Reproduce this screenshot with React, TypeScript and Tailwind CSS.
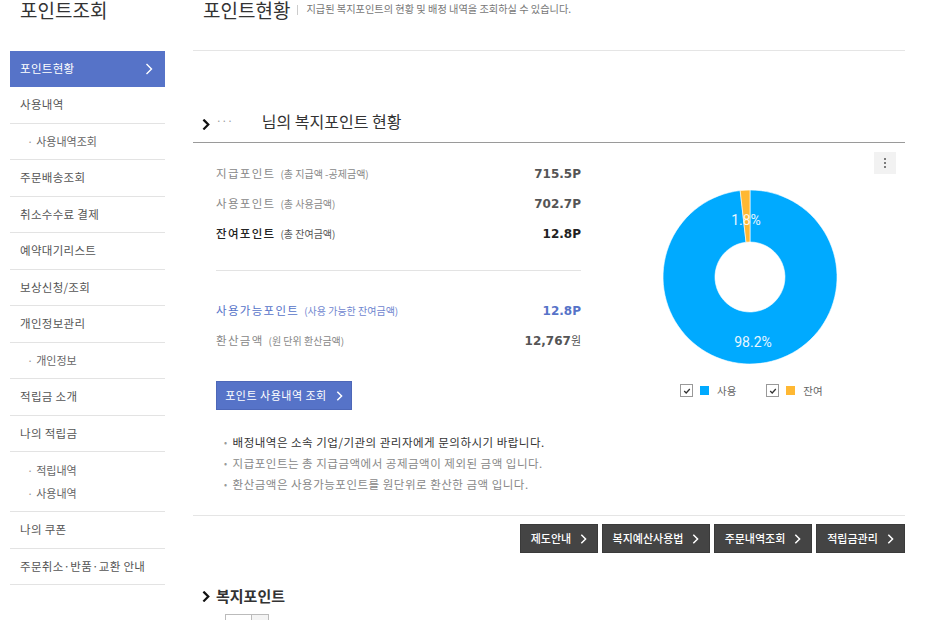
import React from 'react';

// 포인트조회 > 포인트현황 화면

const KR = { fontFamily: '"Noto Sans CJK KR", "Noto Sans", sans-serif' };
const NUM = { fontFamily: '"DejaVu Sans", "Noto Sans CJK KR", sans-serif' };

type MenuItem = { label: string; sub?: boolean; active?: boolean };

const menu: MenuItem[][] = [
  [{ label: '포인트현황', active: true }],
  [{ label: '사용내역' }],
  [{ label: '사용내역조회', sub: true }],
  [{ label: '주문배송조회' }],
  [{ label: '취소수수료 결제' }],
  [{ label: '예약대기리스트' }],
  [{ label: '보상신청/조회' }],
  [{ label: '개인정보관리' }],
  [{ label: '개인정보', sub: true }],
  [{ label: '적립금 소개' }],
  [{ label: '나의 적립금' }],
  [
    { label: '적립내역', sub: true },
    { label: '사용내역', sub: true },
  ],
  [{ label: '나의 쿠폰' }],
  [{ label: '주문취소·반품·교환 안내' }],
];

const Chevron = ({ className = '', stroke = 'currentColor', width = 1.6 }: { className?: string; stroke?: string; width?: number }) => (
  <svg viewBox="0 0 8 12" className={className} fill="none">
    <polyline points="2,1.5 6.5,6 2,10.5" stroke={stroke} strokeWidth={width} strokeLinecap="square" />
  </svg>
);

const Sidebar = () => (
  <aside className="w-[155px] ml-[10px] shrink-0" style={KR}>
    <div className="h-[51px] pl-[10px] flex items-start">
      <span className="text-[19px] leading-[19px] text-[#333]">포인트조회</span>
    </div>
    <ul>
      {menu.map((group, gi) => {
        const active = group[0].active;
        const isSubGroup = group[0].sub;
        return (
          <li
            key={gi}
            className={
              active
                ? 'h-[36px] bg-[#5673c8] flex items-center justify-between pl-[10px] pr-[12px] text-white text-[11.5px] tracking-[0.3px]'
                : isSubGroup
                ? `border-b border-[#e3e3e3] flex flex-col justify-center ${group.length > 1 ? 'h-[60px] gap-[7px]' : 'h-[36.5px]'}`
                : 'h-[36.5px] border-b border-[#e3e3e3] flex items-center pl-[10px] text-[11.5px] tracking-[0.3px] text-[#555]'
            }
          >
            {active ? (
              <>
                <span>{group[0].label}</span>
                <Chevron className="w-[8px] h-[12px]" stroke="#fff" width={1.4} />
              </>
            ) : isSubGroup ? (
              group.map((s, si) => (
                <div key={si} className="pl-[17px] text-[11px] text-[#666] leading-[16px]">
                  <span className="text-[#999] mr-[3px]">·</span>
                  {s.label}
                </div>
              ))
            ) : (
              group[0].label
            )}
          </li>
        );
      })}
    </ul>
  </aside>
);

const StatRow = ({
  label,
  sub,
  value,
  unit,
  tone,
}: {
  label: string;
  sub: string;
  value: string;
  unit?: string;
  tone: 'gray' | 'dark' | 'blue';
}) => {
  const labelCls =
    tone === 'blue' ? 'text-[#5673c8]' : tone === 'dark' ? 'text-[#222] font-medium' : 'text-[#888]';
  const subCls = tone === 'blue' ? 'text-[#6f86cf]' : tone === 'dark' ? 'text-[#555]' : 'text-[#888]';
  const valCls = tone === 'blue' ? 'text-[#5673c8]' : tone === 'dark' ? 'text-[#222]' : 'text-[#555]';
  return (
    <div className="h-[30px] flex items-center justify-between">
      <div className="flex items-baseline gap-[5px]" style={KR}>
        <span className={`text-[11.5px] tracking-[1.3px] ${labelCls}`}>{label}</span>
        <span className={`text-[10px] ${subCls}`}>{sub}</span>
      </div>
      <div className={`text-[12px] font-bold ${valCls}`} style={NUM}>
        {value}
        {unit && (
          <span className="text-[11px] font-normal" style={KR}>
            {unit}
          </span>
        )}
      </div>
    </div>
  );
};

const Donut = () => (
  <svg width="180" height="180" viewBox="0 0 180 180">
    <path
      d="M 90 3 A 87 87 0 1 1 80.18 3.56 L 86.05 55.22 A 35 35 0 1 0 90 55 Z"
      fill="#00aaff"
      stroke="#fff"
      strokeWidth="0.6"
    />
    <path
      d="M 90 3 A 87 87 0 0 0 80.18 3.56 L 86.05 55.22 A 35 35 0 0 1 90 55 Z"
      fill="#ffb833"
      stroke="#fff"
      strokeWidth="0.6"
    />
    <text x="86" y="38" textAnchor="middle" fill="#fff" fontSize="14" style={{ fontFamily: 'Roboto, "Noto Sans", sans-serif' }} opacity="0.9">
      1.8%
    </text>
    <text x="93" y="160" textAnchor="middle" fill="#fff" fontSize="14" style={{ fontFamily: 'Roboto, "Noto Sans", sans-serif' }} opacity="0.9">
      98.2%
    </text>
  </svg>
);

const LegendItem = ({ color, label }: { color: string; label: string }) => (
  <div className="flex items-center">
    <span className="w-[13px] h-[13px] border border-[#999] bg-white flex items-center justify-center">
      <svg viewBox="0 0 10 10" className="w-[8px] h-[8px]">
        <polyline points="1.5,5 4,7.5 8.5,2.5" fill="none" stroke="#333" strokeWidth="1.6" />
      </svg>
    </span>
    <span className="w-[9px] h-[9px] ml-[7px]" style={{ background: color }} />
    <span className="ml-[8px] text-[10.5px] text-[#666]" style={KR}>
      {label}
    </span>
  </div>
);

const DarkButton = ({ label, w }: { label: string; w: string }) => (
  <button
    className={`${w} h-[29px] bg-[#444] border border-[#3a3a3a] text-white text-[11px] font-medium flex items-center justify-center gap-[9px]`}
    style={KR}
  >
    {label}
    <Chevron className="w-[7px] h-[10px]" stroke="#fff" width={1.8} />
  </button>
);

export default function App() {
  return (
    <div className="w-[930px] h-[620px] overflow-hidden bg-white flex" style={KR}>
      <Sidebar />

      <main className="ml-[28px] w-[712px] shrink-0">
        {/* 페이지 헤더 */}
        <div className="h-[51px] border-b border-[#e5e5e5] pl-[10px] flex items-start">
          <span className="text-[19px] leading-[19px] text-[#333]">포인트현황</span>
          <span className="ml-[7px] mt-[5px] w-px h-[10px] bg-[#ccc]" />
          <span className="ml-[8px] mt-[2px] text-[10.2px] leading-[14px] text-[#777]">
            지급된 복지포인트의 현황 및 배정 내역을 조회하실 수 있습니다.
          </span>
        </div>

        {/* 섹션 타이틀 */}
        <div className="h-[92px] border-b border-[#9a9a9a] flex items-end pb-[9px] pl-[9px]">
          <Chevron className="w-[8px] h-[11px] mb-[3px]" stroke="#111" width={2.4} />
          <span className="ml-[6px] text-[#999] text-[10px] mb-[5px]">···</span>
          <span className="ml-[29px] text-[16px] text-[#333]">님의 복지포인트 현황</span>
        </div>

        <div className="flex border-b border-[#e5e5e5]">
          {/* 좌측 포인트 내역 */}
          <div className="ml-[23px] w-[365px] pt-[16px] pb-[20px]">
            <StatRow label="지급포인트" sub="(총 지급액 -공제금액)" value="715.5P" tone="gray" />
            <StatRow label="사용포인트" sub="(총 사용금액)" value="702.7P" tone="gray" />
            <StatRow label="잔여포인트" sub="(총 잔여금액)" value="12.8P" tone="dark" />
            <div className="mt-[21px] border-t border-[#e3e3e3]" />
            <div className="mt-[25px]">
              <StatRow label="사용가능포인트" sub="(사용 가능한 잔여금액)" value="12.8P" tone="blue" />
              <StatRow label="환산금액" sub="(원 단위 환산금액)" value="12,767" unit="원" tone="gray" />
            </div>
            <button className="mt-[25px] w-[136px] h-[29px] bg-[#5673c8] border border-[#4d67b8] text-white text-[11px] flex items-center justify-center gap-[9px] tracking-[0.5px]">
              포인트 사용내역 조회
              <Chevron className="w-[7px] h-[10px]" stroke="#fff" width={1.8} />
            </button>
            <ul className="mt-[22px] ml-[8px] text-[11.5px] tracking-[0.5px]">
              <li className="h-[21px] flex items-center text-[#333]">
                <span className="text-[#999] text-[9px] mr-[5px]">•</span>배정내역은 소속 기업/기관의 관리자에게 문의하시기 바랍니다.
              </li>
              <li className="h-[21px] flex items-center text-[#888]">
                <span className="text-[#999] text-[9px] mr-[5px]">•</span>지급포인트는 총 지급금액에서 공제금액이 제외된 금액 입니다.
              </li>
              <li className="h-[21px] flex items-center text-[#888]">
                <span className="text-[#999] text-[9px] mr-[5px]">•</span>환산금액은 사용가능포인트를 원단위로 환산한 금액 입니다.
              </li>
            </ul>
          </div>

          {/* 우측 차트 */}
          <div className="flex-1 flex flex-col">
            <div className="flex justify-end pr-[9px] pt-[9px]">
              <div className="w-[22px] h-[22px] bg-[#f2f2f2] flex flex-col items-center justify-center gap-[2px]">
                <span className="w-[2px] h-[2px] bg-[#555] rounded-full" />
                <span className="w-[2px] h-[2px] bg-[#555] rounded-full" />
                <span className="w-[2px] h-[2px] bg-[#555] rounded-full" />
              </div>
            </div>
            <div className="ml-[79px] mt-[13px]">
              <Donut />
            </div>
            <div className="ml-[99px] mt-[16px] flex gap-[30px]">
              <LegendItem color="#00aaff" label="사용" />
              <LegendItem color="#ffb833" label="잔여" />
            </div>
          </div>
        </div>

        {/* 하단 바로가기 버튼 */}
        <div className="flex justify-end gap-[4px] pt-[8px]">
          <DarkButton label="제도안내" w="w-[78px]" />
          <DarkButton label="복지예산사용법" w="w-[108px]" />
          <DarkButton label="주문내역조회" w="w-[98px]" />
          <DarkButton label="적립금관리" w="w-[89px]" />
        </div>

        <div className="mt-[32px] pl-[9px] flex items-center">
          <Chevron className="w-[8px] h-[11px]" stroke="#111" width={2.4} />
          <span className="ml-[6px] text-[15px] font-bold text-[#333]">복지포인트</span>
        </div>
        <div className="mt-[6px] ml-[32px] flex">
          <div className="w-[27px] h-[20px] border border-[#bbb]" />
          <div className="w-[17px] h-[20px] border border-l-0 border-[#bbb] bg-[#f4f4f4]" />
        </div>
      </main>
    </div>
  );
}
